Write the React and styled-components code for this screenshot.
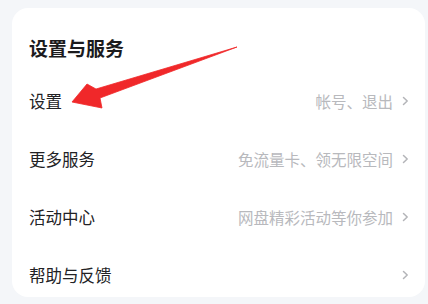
import styled, { createGlobalStyle } from "styled-components";

const GlobalStyle = createGlobalStyle`
  html, body {
    margin: 0;
    padding: 0;
    background: #f4f6f9;
    font-family: "Noto Sans CJK SC", "Noto Sans", sans-serif;
  }
`;

const Page = styled.div`
  position: relative;
  width: 428px;
  height: 304px;
  padding: 8px 3px 0 12px;
  box-sizing: border-box;
  overflow: hidden;
`;

const Card = styled.div`
  background: #ffffff;
  border-radius: 16px;
  height: 289px;
  padding: 0 16px 0 17px;
  box-sizing: border-box;
  overflow: hidden;
`;

const Title = styled.div`
  padding: 28px 0 12px;
  font-size: 19px;
  line-height: 24px;
  font-weight: 700;
  color: #1b1b1d;
`;

const Row = styled.div`
  display: flex;
  align-items: center;
  justify-content: space-between;
  height: 58px;
`;

const Label = styled.span`
  font-size: 16.5px;
  color: #222225;
`;

const Extra = styled.span`
  display: flex;
  align-items: center;
  gap: 9px;
  font-size: 15.5px;
  color: #b8b9bd;
`;

const Chevron = () => (
  <svg width="7" height="10" viewBox="0 0 7 10">
    <path d="M1.5 1.5 L5.2 5 L1.5 8.5" fill="none" stroke="#b3b4b8" strokeWidth="1.5" strokeLinecap="round" strokeLinejoin="round" />
  </svg>
);

const Arrow = styled.svg`
  position: absolute;
  left: 0;
  top: 0;
  pointer-events: none;
`;

const items = [
  { label: "设置", extra: "帐号、退出" },
  { label: "更多服务", extra: "免流量卡、领无限空间" },
  { label: "活动中心", extra: "网盘精彩活动等你参加" },
  { label: "帮助与反馈", extra: "" },
];

export default function App() {
  return (
    <>
      <GlobalStyle />
      <Page>
        <Card>
          <Title>设置与服务</Title>
          {items.map((item) => (
            <Row key={item.label}>
              <Label>{item.label}</Label>
              <Extra>
                {item.extra}
                <Chevron />
              </Extra>
            </Row>
          ))}
        </Card>
        <Arrow width="428" height="304" viewBox="0 0 428 304">
          <path
            d="M237 47 L100 98 L102 108 L72 102 L87 84 L96 89 Z"
            fill="#f0282a"
            stroke="#f0282a"
            strokeWidth="0.8"
            strokeLinejoin="round"
          />
        </Arrow>
      </Page>
    </>
  );
}
